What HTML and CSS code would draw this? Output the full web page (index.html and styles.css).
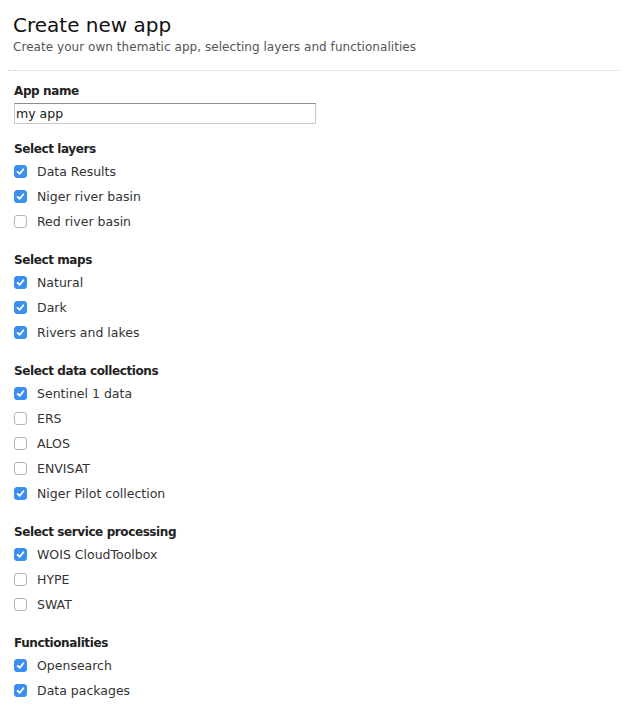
FILE: index.html
```html
<!DOCTYPE html>
<html>
<head>
<meta charset="utf-8">
<link rel="stylesheet" href="styles.css">
</head>
<body>
<div class="page">
  <header class="head">
    <h1 class="title">Create new app</h1>
    <p class="subtitle">Create your own thematic app, selecting layers and functionalities</p>
  </header>
  <form class="form">
    <div class="group">
      <label class="group-title name-title" for="appname">App name</label>
      <input class="text-input" id="appname" type="text" value="my app">
    </div>
    <div class="group">
      <div class="group-title">Select layers</div>
      <label class="opt"><input type="checkbox" checked><span>Data Results</span></label>
      <label class="opt"><input type="checkbox" checked><span>Niger river basin</span></label>
      <label class="opt"><input type="checkbox"><span>Red river basin</span></label>
    </div>
    <div class="group">
      <div class="group-title">Select maps</div>
      <label class="opt"><input type="checkbox" checked><span>Natural</span></label>
      <label class="opt"><input type="checkbox" checked><span>Dark</span></label>
      <label class="opt"><input type="checkbox" checked><span>Rivers and lakes</span></label>
    </div>
    <div class="group">
      <div class="group-title">Select data collections</div>
      <label class="opt"><input type="checkbox" checked><span>Sentinel 1 data</span></label>
      <label class="opt"><input type="checkbox"><span>ERS</span></label>
      <label class="opt"><input type="checkbox"><span>ALOS</span></label>
      <label class="opt"><input type="checkbox"><span>ENVISAT</span></label>
      <label class="opt"><input type="checkbox" checked><span>Niger Pilot collection</span></label>
    </div>
    <div class="group">
      <div class="group-title">Select service processing</div>
      <label class="opt"><input type="checkbox" checked><span>WOIS CloudToolbox</span></label>
      <label class="opt"><input type="checkbox"><span>HYPE</span></label>
      <label class="opt"><input type="checkbox"><span>SWAT</span></label>
    </div>
    <div class="group">
      <div class="group-title">Functionalities</div>
      <label class="opt"><input type="checkbox" checked><span>Opensearch</span></label>
      <label class="opt"><input type="checkbox" checked><span>Data packages</span></label>
    </div>
  </form>
</div>
</body>
</html>
```

FILE: styles.css
```css
html, body {
  margin: 0;
  padding: 0;
  background: #fff;
}
body {
  font-family: "DejaVu Sans", Verdana, sans-serif;
  color: #333;
}
.page {
  margin: 0 3px 0 8px;
}
.head {
  padding: 13px 0 15px 5px;
  border-bottom: 1px dotted #c8c8c8;
}
.title {
  margin: 0;
  font-weight: 400;
  font-size: 20px;
  line-height: 24px;
  color: #111;
}
.subtitle {
  margin: 2px 0 0;
  font-size: 12px;
  line-height: 16px;
  letter-spacing: 0.05px;
  color: #555;
}
.form {
  padding: 11px 0 0 6px;
  display: flex;
  flex-direction: column;
  gap: 16px;
}
.group {
  display: flex;
  flex-direction: column;
}
.group + .group + .group {
  margin-top: 1px;
}
.group-title {
  font-weight: 700;
  font-size: 12px;
  letter-spacing: -0.4px;
  line-height: 18px;
  color: #222;
  margin-bottom: 1px;
}
.name-title {
  margin-bottom: 3px;
}
.text-input {
  box-sizing: border-box;
  width: 302px;
  height: 21px;
  margin: 0;
  padding: 0 1px;
  border: 1px solid #c8c8c8;
  border-top-color: #8e8e8e;
  font-family: inherit;
  font-size: 12.5px;
  color: #222;
  outline: none;
}
.opt {
  display: flex;
  align-items: center;
  height: 25px;
  font-size: 12.5px;
  color: #333;
}
.opt span {
  margin-left: 10px;
}
.opt input {
  appearance: none;
  -webkit-appearance: none;
  box-sizing: border-box;
  width: 13px;
  height: 13px;
  margin: 0;
  border: 1px solid #b5b5b5;
  border-radius: 3px;
  background: #fff;
  flex: none;
}
.opt input:checked {
  border-color: #3a8ff3;
  background: #3a8ff3 url("data:image/svg+xml;utf8,<svg xmlns='http://www.w3.org/2000/svg' viewBox='0 0 13 13'><path d='M3.6 6.8 L5.6 8.9 L9.4 4.2' fill='none' stroke='white' stroke-width='1.8' stroke-linecap='round' stroke-linejoin='round'/></svg>") center/13px 13px no-repeat;
}
```
